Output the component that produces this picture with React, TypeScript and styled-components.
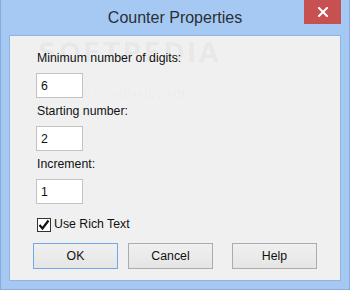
import styled, { createGlobalStyle } from 'styled-components';

const GlobalStyle = createGlobalStyle`
  html, body {
    margin: 0;
    padding: 0;
    background: #a5c9f2;
  }
`;

const FONT = `"Liberation Sans", Arial, sans-serif`;

function CloseIcon() {
  return (
    <svg width="10" height="10" viewBox="0 0 10 10">
      <path d="M1 1 L9 9 M9 1 L1 9" stroke="#fff" strokeWidth="2" strokeLinecap="square" />
    </svg>
  );
}

function CheckIcon() {
  return (
    <svg width="12" height="12" viewBox="0 0 12 12">
      <path d="M1.5 6 L4.5 9.5 L10.5 1.5" stroke="#111" strokeWidth="2.2" fill="none" />
    </svg>
  );
}

interface FieldProps {
  label: string;
  value: string;
}

function Field({ label, value }: FieldProps) {
  return (
    <StyledField>
      <StyledLabel>{label}</StyledLabel>
      <StyledInput defaultValue={value} />
    </StyledField>
  );
}

function App() {
  return (
    <>
      <GlobalStyle />
      <StyledWindow>
        <StyledTitleBar>
          <span />
          <StyledTitle>Counter Properties</StyledTitle>
          <StyledClose>
            <CloseIcon />
          </StyledClose>
        </StyledTitleBar>
        <StyledClient>
          <StyledWatermark aria-hidden>
            <StyledWatermarkBig>SOFTPEDIA</StyledWatermarkBig>
            <StyledWatermarkSmall>www.softpedia.com</StyledWatermarkSmall>
          </StyledWatermark>
          <StyledFields>
            <Field label="Minimum number of digits:" value="6" />
            <Field label="Starting number:" value="2" />
            <Field label="Increment:" value="1" />
          </StyledFields>
          <StyledCheckRow>
            <StyledCheckBox>
              <CheckIcon />
            </StyledCheckBox>
            <span>Use Rich Text</span>
          </StyledCheckRow>
          <StyledButtonRow>
            <StyledButton $focused>OK</StyledButton>
            <StyledButton>Cancel</StyledButton>
            <StyledButton $offset={19}>Help</StyledButton>
          </StyledButtonRow>
        </StyledClient>
      </StyledWindow>
    </>
  );
}

export default App;

const StyledWindow = styled.div`
  width: 350px;
  height: 290px;
  box-sizing: border-box;
  padding: 0 8px 8px 8px;
  background: #a5c9f2;
  border: 1px solid #86acd9;
  border-top: none;

  display: flex;
  flex-direction: column;
  font-family: ${FONT};
`;

const StyledTitleBar = styled.div`
  height: 35px;
  display: grid;
  grid-template-columns: 1fr auto 1fr;
  align-items: start;
`;

const StyledTitle = styled.div`
  margin-top: 9px;
  font-size: 16px;
  line-height: 18px;
  color: #2a2f36;
`;

const StyledClose = styled.div`
  justify-self: end;
  width: 37px;
  height: 24px;
  background: #c75050;

  display: flex;
  align-items: center;
  justify-content: center;
`;

const StyledClient = styled.div`
  position: relative;
  flex: 1;
  box-sizing: border-box;
  background: #f0f0f0;
  border: 1px solid #8fb4e3;
  padding: 15px 0 0 26px;

  display: flex;
  flex-direction: column;
  font-size: 12.3px;
  color: #111;
`;

const StyledWatermark = styled.div`
  position: absolute;
  left: 28px;
  top: 2px;
  pointer-events: none;

  display: flex;
  flex-direction: column;
  align-items: center;
  color: rgba(0, 0, 0, 0.035);
`;

const StyledWatermarkBig = styled.div`
  font-family: "DejaVu Sans", sans-serif;
  font-size: 26px;
  font-weight: bold;
  letter-spacing: 2px;
`;

const StyledWatermarkSmall = styled.div`
  margin-top: 18px;
  font-family: "Liberation Serif", serif;
  font-size: 14px;
`;

const StyledFields = styled.div`
  position: relative;
  display: flex;
  flex-direction: column;
  gap: 6px;
`;

const StyledField = styled.div`
  display: flex;
  flex-direction: column;
  gap: 7px;
`;

const StyledLabel = styled.div`
  margin-left: 1px;
  line-height: 15px;
`;

const StyledInput = styled.input`
  width: 47px;
  height: 25px;
  box-sizing: border-box;
  margin: 0;
  padding: 0 0 0 4px;
  border: 1px solid #c3c3c3;
  background: #fff;
  font-family: ${FONT};
  font-size: 12.3px;
  color: #111;
  outline: none;
`;

const StyledCheckRow = styled.div`
  position: relative;
  margin-top: 13px;
  margin-left: 1px;
  display: flex;
  align-items: center;
  gap: 3px;
  line-height: 15px;
`;

const StyledCheckBox = styled.div`
  width: 14px;
  height: 14px;
  box-sizing: border-box;
  border: 1px solid #333;
  background: #fff;

  display: flex;
  align-items: center;
  justify-content: center;
`;

const StyledButtonRow = styled.div`
  margin-top: 11px;
  margin-left: -3px;
  display: flex;
  gap: 10px;
`;

const StyledButton = styled.button<{ $focused?: boolean; $offset?: number }>`
  width: 85px;
  height: 26px;
  box-sizing: border-box;
  margin: 0 0 0 ${({ $offset }) => ($offset ? $offset - 10 : 0)}px;
  padding: 0;
  border: 1px solid ${({ $focused }) => ($focused ? '#6fa9e8' : '#acacac')};
  background: linear-gradient(#f0f0f0, #e5e5e5);
  font-family: ${FONT};
  font-size: 12.3px;
  color: #111;
`;
